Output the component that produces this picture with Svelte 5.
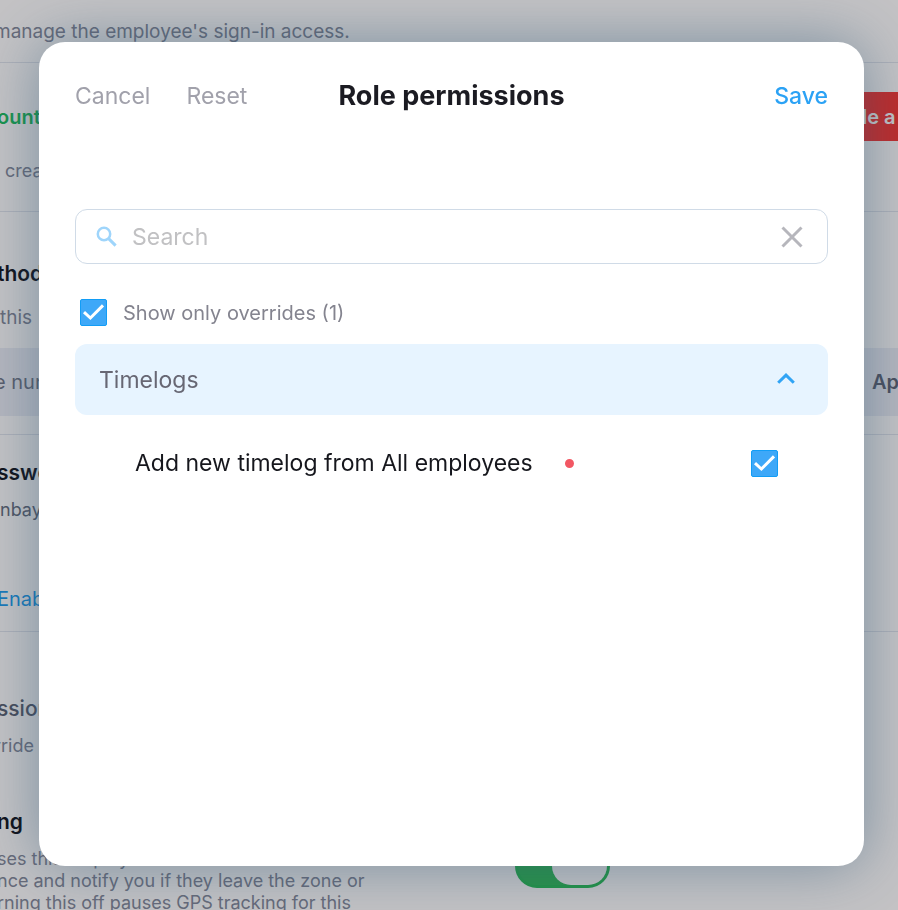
<script>
  let search = $state('')
  let onlyOverrides = $state(true)
  let open = $state(true)
  let tracking = $state(true)

  let permissions = $state([
    { id: 'add-timelog', label: 'Add new timelog from All employees', checked: true, overridden: true }
  ])

  const visible = $derived(
    permissions.filter(p =>
      (!onlyOverrides || p.overridden) && p.label.toLowerCase().includes(search.toLowerCase())
    )
  )
  const overrideCount = $derived(permissions.filter(p => p.overridden).length)

  function reset() {
    permissions.forEach(p => (p.checked = true))
    search = ''
  }
</script>

<main class="page">
  <section class="intro">
    <p class="lead">manage the employee's sign-in access.</p>
  </section>

  <section class="account">
    <div class="row">
      <strong class="status">ount</strong>
      <button class="danger" type="button">le a</button>
    </div>
    <p class="note">&nbsp;crea</p>
  </section>

  <section class="methods">
    <h2>thod</h2>
    <p class="note">this</p>
    <div class="band">
      <span>e nun</span>
      <strong>Ap</strong>
    </div>
  </section>

  <section class="password">
    <h2>sswo</h2>
    <p class="value">nbay</p>
    <a class="link" href="#enable">Enab</a>
  </section>

  <section class="permissions">
    <h3>ssion</h3>
    <p class="note">rride</p>
    <div class="tracking">
      <div>
        <h2>ng</h2>
        <p class="note lines">ses this employee's<br>nce and notify you if they leave the zone or<br>rning this off pauses GPS tracking for this</p>
      </div>
      <input class="switch" type="checkbox" role="switch" aria-label="ng" bind:checked={tracking}>
    </div>
  </section>
</main>

<div class="backdrop">
  <div class="modal" role="dialog" aria-modal="true" aria-labelledby="modal-title">
    <header class="modal__header">
      <div class="modal__actions">
        <button class="text-btn" type="button">Cancel</button>
        <button class="text-btn" type="button" onclick={reset}>Reset</button>
      </div>
      <h1 id="modal-title">Role permissions</h1>
      <button class="text-btn text-btn--primary" type="button">Save</button>
    </header>

    <div class="search">
      <svg class="search__icon" viewBox="0 0 22 22" fill="none" stroke="currentColor" stroke-width="2.5">
        <circle cx="8" cy="8" r="6.2" />
        <path d="M12.6 12.6 19.6 19.6" stroke-width="3" />
      </svg>
      <input type="text" placeholder="Search" aria-label="Search" bind:value={search}>
      <button class="search__clear" type="button" aria-label="Clear" onclick={() => (search = '')}>
        <svg viewBox="0 0 22 22" fill="none" stroke="currentColor" stroke-width="3">
          <path d="M1.5 1.5 20.5 20.5M20.5 1.5 1.5 20.5" />
        </svg>
      </button>
    </div>

    <label class="overrides">
      <span class="check">
        <input type="checkbox" bind:checked={onlyOverrides}>
        <svg viewBox="0 0 27 27"><path d="M4 13.2 10.4 19 23 6.4" /></svg>
      </span>
      <span>Show only overrides ({overrideCount})</span>
    </label>

    <button class="group" type="button" aria-expanded={open} onclick={() => (open = !open)}>
      <span>Timelogs</span>
      <svg class:closed={!open} viewBox="0 0 18 13"><path d="M1.2 9.8 9 2.1 16.8 9.8" /></svg>
    </button>

    {#if open}
      <ul class="items">
        {#each visible as permission (permission.id)}
          <li>
            <label for={permission.id}>{permission.label}</label>
            {#if permission.overridden}<i class="dot"></i>{/if}
            <span class="check">
              <input id={permission.id} type="checkbox" bind:checked={permission.checked}>
              <svg viewBox="0 0 27 27"><path d="M4 13.2 10.4 19 23 6.4" /></svg>
            </span>
          </li>
        {/each}
      </ul>
    {/if}
  </div>
</div>

<style>
  :global(body) {
    overflow: hidden;
    font-family: Inter, "Liberation Sans", sans-serif;
    background: #fff;
  }

  h1, h2, h3, p, ul {
    margin: 0;
    padding: 0;
  }

  button, input {
    font: inherit;
  }

  button {
    border: 0;
    padding: 0;
    background: none;
    cursor: pointer;
  }

  .page {
    height: 100vh;
    overflow: hidden;
    color: #858b9c;
    font-size: 18px;
    line-height: 24px;
  }

  .page section {
    border-bottom: 1px solid #e2e6ee;
  }

  .page section:last-child {
    border-bottom: 0;
  }

  .page p, .page h2, .page h3, .status, .link, .band span {
    margin-left: -3px;
    white-space: nowrap;
  }

  .page h2 {
    color: #14171f;
    font-size: 21px;
    font-weight: 600;
    line-height: 28px;
  }

  .page h3 {
    color: #5c6475;
    font-size: 21px;
    font-weight: 500;
    line-height: 28px;
  }

  .intro {
    padding: 20px 0 18px;
  }

  .page .lead {
    margin-left: -6px;
    font-size: 19px;
  }

  .account {
    padding: 29px 0 28px;
  }

  .row {
    display: flex;
    align-items: center;
    justify-content: space-between;
    margin-bottom: 18px;
  }

  .status {
    color: #1fc063;
    font-size: 20px;
    font-weight: 600;
  }

  .account .note {
    margin-left: 0;
  }

  .danger {
    width: 64px;
    height: 49px;
    padding-left: 28px;
    overflow: hidden;
    color: #fff;
    font-size: 20px;
    font-weight: 600;
    text-align: left;
    white-space: nowrap;
    background: #fa3835;
  }

  .methods {
    padding: 48px 0 18px;
  }

  .methods .note {
    margin: 18px 0 18px 0;
    font-size: 19px;
  }

  .band {
    display: flex;
    align-items: center;
    justify-content: space-between;
    height: 68px;
    font-size: 20px;
    background: #eceff7;
  }

  .band span {
    margin-left: -6px;
    color: #737a8b;
  }

  .band strong {
    width: 26px;
    color: #606778;
    font-weight: 600;
  }

  .password {
    padding: 24px 0 20px;
  }

  .password .value {
    margin: 11px 0 65px 0;
    color: #676f80;
  }

  .link {
    display: block;
    color: #1e9ff0;
    font-size: 20px;
    text-decoration: none;
  }

  .permissions {
    padding-top: 63px;
  }

  .permissions h3 {
    margin-bottom: 11px;
  }

  .permissions > .note {
    margin-left: -6px;
  }

  .tracking {
    display: flex;
    align-items: flex-end;
    gap: 150px;
    margin-top: 50px;
  }

  .tracking h2 {
    margin-bottom: 12px;
  }

  .lines {
    line-height: 22px;
  }

  .switch {
    appearance: none;
    width: 95px;
    height: 44px;
    margin: 0 0 26px;
    border: 3px solid #2cc058;
    border-radius: 22px;
    background: #cfd4dc;
  }

  .switch:checked {
    background: #34c05c;
  }

  .switch::before {
    content: "";
    display: block;
    width: 55px;
    height: 38px;
    border-radius: 19px;
    background: #fff;
  }

  .switch:checked::before {
    margin-left: auto;
  }

  .backdrop {
    position: fixed;
    inset: 0;
    display: flex;
    padding: 42px 34px 44px 39px;
    background: rgba(8, 6, 14, .24);
  }

  .modal {
    flex: 1;
    padding: 36px;
    border-radius: 26px;
    background: #fff;
    box-shadow: 0 0 60px rgba(45, 90, 120, .5);
  }

  .modal__header {
    display: grid;
    grid-template-columns: 1fr auto 1fr;
    align-items: center;
    height: 36px;
    margin-bottom: 95px;
  }

  .modal__actions {
    display: flex;
    gap: 36px;
  }

  .modal h1 {
    color: #1b1b22;
    font-size: 27px;
    font-weight: 700;
    line-height: 36px;
  }

  .text-btn {
    color: #a1a1ab;
    font-size: 23px;
    line-height: 28px;
  }

  .text-btn--primary {
    justify-self: end;
    color: #2ba2f5;
    font-weight: 500;
  }

  .search {
    display: flex;
    align-items: center;
    height: 53px;
    margin-bottom: 35px;
    padding: 0 24px 0 20px;
    border: 1px solid #d0dbe7;
    border-radius: 12px;
  }

  .search__icon {
    flex: none;
    width: 22px;
    height: 22px;
    color: #9fd5fb;
  }

  .search input {
    flex: 1;
    min-width: 0;
    padding: 0 14px;
    border: 0;
    outline: 0;
    color: #16171d;
    font-size: 23px;
    background: none;
  }

  .search input::placeholder {
    color: #c1c1c3;
  }

  .search__clear {
    width: 22px;
    height: 22px;
    color: #b6b6bc;
  }

  .search__clear svg {
    display: block;
  }

  .check {
    position: relative;
    flex: none;
    width: 27px;
    height: 27px;
  }

  .check input {
    appearance: none;
    display: block;
    box-sizing: border-box;
    width: 100%;
    height: 100%;
    margin: 0;
    border: 1px solid #b9c4cf;
    border-radius: 2px;
    background: #fff;
  }

  .check input:checked {
    border-color: #129df6;
    background: #3ea8f8;
  }

  .check svg {
    position: absolute;
    inset: 0;
    fill: none;
    stroke: #fff;
    stroke-width: 3;
    pointer-events: none;
  }

  .overrides {
    display: flex;
    align-items: center;
    gap: 16px;
    margin: 0 0 18px 5px;
    color: #84848f;
    font-size: 20px;
    line-height: 26px;
  }

  .group {
    display: flex;
    align-items: center;
    justify-content: space-between;
    width: 100%;
    height: 71px;
    padding: 0 33px 0 24px;
    border-radius: 12px;
    color: #676774;
    font-size: 23px;
    background: #e7f4ff;
  }

  .group svg {
    width: 18px;
    height: 13px;
    fill: none;
    stroke: #31a4f5;
    stroke-width: 3;
  }

  .group svg.closed {
    transform: rotate(180deg);
  }

  .items {
    padding: 32px 50px 0 60px;
    list-style: none;
  }

  .items li {
    display: flex;
    align-items: center;
    height: 32px;
    color: #16171d;
    font-size: 23px;
  }

  .items .check {
    margin-left: auto;
  }

  .dot {
    width: 9px;
    height: 9px;
    margin-left: 32px;
    border-radius: 50%;
    background: #f25763;
  }
</style>
